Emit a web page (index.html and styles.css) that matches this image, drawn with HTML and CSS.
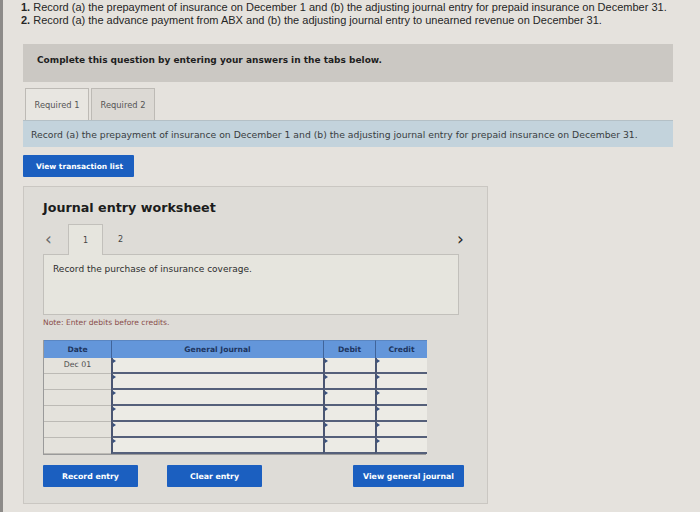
FILE: index.html
```html
<!DOCTYPE html>
<html>
<head>
<meta charset="utf-8">
<link rel="stylesheet" href="styles.css">
</head>
<body>
<div class="page">
  <div class="questions">
    <div><b>1.</b> Record (a) the prepayment of insurance on December 1 and (b) the adjusting journal entry for prepaid insurance on December 31.</div>
    <div><b>2.</b> Record (a) the advance payment from ABX and (b) the adjusting journal entry to unearned revenue on December 31.</div>
  </div>
  <div class="complete">Complete this question by entering your answers in the tabs below.</div>
  <div class="tabs">
    <div class="tab active">Required 1</div>
    <div class="tab">Required 2</div>
  </div>
  <div class="info">Record (a) the prepayment of insurance on December 1 and (b) the adjusting journal entry for prepaid insurance on December 31.</div>
  <div class="btn view-list">View transaction list</div>
  <div class="panel">
    <div class="title">Journal entry worksheet</div>
    <div class="nav">
      <span class="arrow left">&lsaquo;</span>
      <span class="ntab active">1</span>
      <span class="ntab">2</span>
      <span class="spacer"></span>
      <span class="arrow right">&rsaquo;</span>
    </div>
    <div class="desc">Record the purchase of insurance coverage.</div>
    <div class="note">Note: Enter debits before credits.</div>
    <div class="journal">
      <div class="hd c-date">Date</div>
      <div class="hd c-acct">General Journal</div>
      <div class="hd c-deb">Debit</div>
      <div class="hd c-cred">Credit</div>

      <div class="date">Dec 01</div><div class="in"></div><div class="in"></div><div class="in"></div>
      <div class="date"></div><div class="in"></div><div class="in"></div><div class="in"></div>
      <div class="date"></div><div class="in"></div><div class="in"></div><div class="in"></div>
      <div class="date"></div><div class="in"></div><div class="in"></div><div class="in"></div>
      <div class="date"></div><div class="in"></div><div class="in"></div><div class="in"></div>
      <div class="date"></div><div class="in"></div><div class="in"></div><div class="in"></div>
    </div>
    <div class="actions">
      <div class="btn record">Record entry</div>
      <div class="btn clear">Clear entry</div>
      <span class="spacer"></span>
      <div class="btn general">View general journal</div>
    </div>
  </div>
</div>
</body>
</html>
```
FILE: styles.css
```css
html, body {
  margin: 0;
  padding: 0;
}
body {
  background: #e5e2dd;
  width: 700px;
  height: 512px;
  overflow: hidden;
}
.page {
  border-left: 3px solid #8d8b89;
  height: 512px;
  box-sizing: border-box;
  padding-left: 20px;
  font-family: "DejaVu Sans", Verdana, sans-serif;
  color: #2e2e2e;
}
.questions {
  font-family: "Liberation Sans", Arial, sans-serif;
  font-size: 11px;
  line-height: 13px;
  color: #262626;
  padding-top: 1px;
  margin-left: -2px;
}
.questions b {
  font-weight: bold;
}
.complete {
  margin-top: 17px;
  width: 650px;
  height: 38px;
  background: #cbc8c3;
  box-sizing: border-box;
  padding: 10px 0 0 14px;
  font-weight: bold;
  font-size: 9px;
  line-height: 12px;
  color: #1e1e1e;
}
.tabs {
  display: flex;
  gap: 2px;
  margin-top: 6px;
  margin-left: 2px;
}
.tab {
  width: 64px;
  height: 32px;
  box-sizing: border-box;
  border: 1px solid #bdbab5;
  border-bottom: none;
  background: #dcd9d4;
  display: flex;
  align-items: center;
  justify-content: center;
  font-size: 8.3px;
  color: #555;
}
.tab.active {
  background: #e8e6e1;
}
.info {
  width: 650px;
  height: 27px;
  background: #c3d3dc;
  border-top: 1px solid #b4c0c6;
  box-sizing: border-box;
  padding-left: 8px;
  display: flex;
  align-items: center;
  font-size: 9.25px;
  color: #383c40;
}
.btn {
  background: #1b5fc0;
  color: #fff;
  font-weight: bold;
  font-size: 7.8px;
  display: flex;
  align-items: center;
  justify-content: center;
  border-radius: 1px;
  box-sizing: border-box;
  height: 22px;
}
.view-list {
  margin-top: 8px;
  width: 111px;
  justify-content: flex-start;
  padding-left: 13px;
  font-size: 7.5px;
}
.panel {
  margin-top: 9px;
  width: 465px;
  height: 318px;
  box-sizing: border-box;
  background: #dedcd7;
  border: 1px solid #cac7c2;
  padding: 13px 0 0 19px;
}
.title {
  font-weight: bold;
  font-size: 12.7px;
  color: #1c1c1c;
  line-height: 16px;
}
.nav {
  display: flex;
  align-items: flex-end;
  margin-top: 8px;
  width: 424px;
  height: 30px;
}
.arrow {
  font-size: 17px;
  line-height: 22px;
  height: 26px;
  color: #6a6a6a;
  width: 25px;
  padding-left: 2px;
  box-sizing: border-box;
}
.arrow.right {
  color: #2a2a2a;
  width: 12px;
}
.ntab {
  width: 35px;
  height: 30px;
  box-sizing: border-box;
  display: flex;
  align-items: center;
  justify-content: center;
  font-size: 8px;
  color: #444;
}
.ntab.active {
  border: 1px solid #c2c0bb;
  border-bottom: none;
  background: #e6e5de;
  height: 31px;
  margin-bottom: -1px;
  position: relative;
  z-index: 1;
}
.spacer {
  flex: 1;
}
.desc {
  width: 416px;
  height: 61px;
  box-sizing: border-box;
  background: #e6e5de;
  border: 1px solid #c2c0bb;
  padding: 9px 0 0 9px;
  font-size: 9px;
  color: #2d2d2d;
}
.note {
  margin-top: 3px;
  font-size: 7.6px;
  color: #8a4f4b;
  line-height: 10px;
}
.journal {
  margin-top: 12px;
  width: 383px;
  display: grid;
  grid-template-columns: 67px 212px 52px 52px;
  grid-auto-rows: 16px;
  grid-template-rows: 18px;
  border: 1px solid #9a9a9a;
  border-top: none;
  box-sizing: border-box;
}
.hd {
  background: #6396da;
  color: #1d3560;
  font-weight: bold;
  font-size: 7.6px;
  display: flex;
  align-items: center;
  justify-content: center;
  border-top: 1px solid #5a86c2;
  border-left: 1px solid #40649a;
}
.hd.c-date {
  border-left: none;
}
.date {
  background: #e4e2dc;
  border-bottom: 1px solid #bcbab5;
  font-size: 7.8px;
  color: #4c4c4c;
  display: flex;
  align-items: center;
  justify-content: center;
  padding-bottom: 2px;
  box-sizing: border-box;
}
.in {
  background: #ecebe5;
  border-left: 2px solid #4a5672;
  border-bottom: 2px solid #55607a;
  box-sizing: border-box;
  position: relative;
}
.in::before {
  content: "";
  position: absolute;
  left: 0;
  top: 1px;
  border-left: 3px solid #37507e;
  border-top: 2px solid transparent;
  border-bottom: 2px solid transparent;
}
.actions {
  display: flex;
  margin-top: 10px;
  width: 421px;
}
.record {
  width: 95px;
}
.clear {
  width: 95px;
  margin-left: 29px;
}
.general {
  width: 111px;
}
```
